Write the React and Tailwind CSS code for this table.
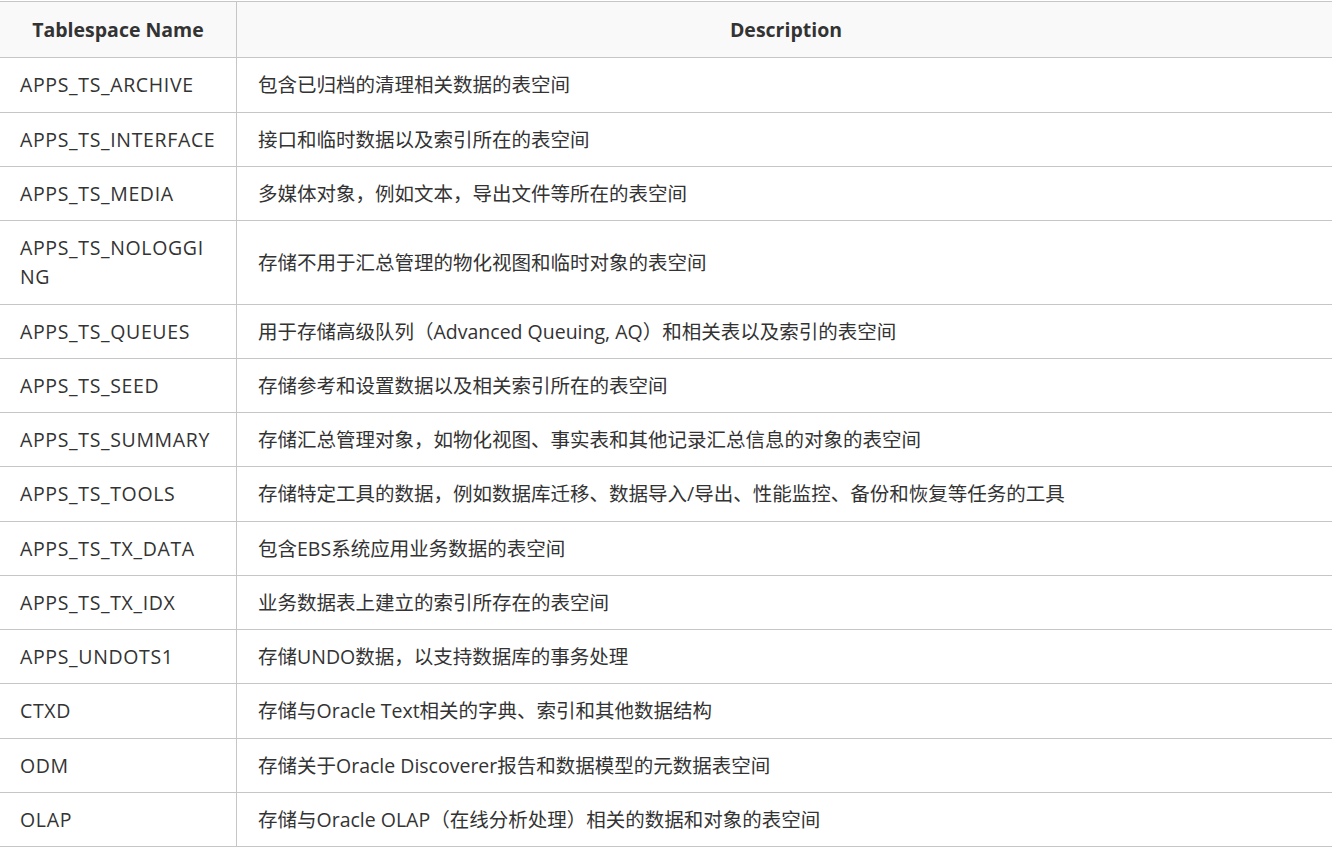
import React from "react";

const rows = [
  ["APPS_TS_ARCHIVE", "包含已归档的清理相关数据的表空间"],
  ["APPS_TS_INTERFACE", "接口和临时数据以及索引所在的表空间"],
  ["APPS_TS_MEDIA", "多媒体对象，例如文本，导出文件等所在的表空间"],
  ["APPS_TS_NOLOGGING", "存储不用于汇总管理的物化视图和临时对象的表空间"],
  ["APPS_TS_QUEUES", "用于存储高级队列（Advanced Queuing, AQ）和相关表以及索引的表空间"],
  ["APPS_TS_SEED", "存储参考和设置数据以及相关索引所在的表空间"],
  ["APPS_TS_SUMMARY", "存储汇总管理对象，如物化视图、事实表和其他记录汇总信息的对象的表空间"],
  ["APPS_TS_TOOLS", "存储特定工具的数据，例如数据库迁移、数据导入/导出、性能监控、备份和恢复等任务的工具"],
  ["APPS_TS_TX_DATA", "包含EBS系统应用业务数据的表空间"],
  ["APPS_TS_TX_IDX", "业务数据表上建立的索引所存在的表空间"],
  ["APPS_UNDOTS1", "存储UNDO数据，以支持数据库的事务处理"],
  ["CTXD", "存储与Oracle Text相关的字典、索引和其他数据结构"],
  ["ODM", "存储关于Oracle Discoverer报告和数据模型的元数据表空间"],
  ["OLAP", "存储与Oracle OLAP（在线分析处理）相关的数据和对象的表空间"],
];

export default function App() {
  return (
    <div
      className="w-full overflow-hidden bg-white pt-px text-[#333] text-[19.5px] leading-[1.5]"
      style={{ fontFamily: '"Open Sans", "Noto Sans CJK SC", sans-serif' }}
    >
      <table className="-ml-px w-[1337px] table-fixed border-collapse">
        <colgroup>
          <col className="w-[237px]" />
          <col />
        </colgroup>
        <thead>
          <tr className="bg-[#f9f9f9]">
            <th className="border border-[#c6c6c6] px-5 py-[13px] text-center font-bold">
              Tablespace Name
            </th>
            <th className="border border-[#c6c6c6] px-5 py-[13px] text-center font-bold">
              Description
            </th>
          </tr>
        </thead>
        <tbody>
          {rows.map(([name, desc]) => (
            <tr key={name}>
              <td className="border border-[#c6c6c6] pl-5 pr-[19px] py-3 break-all tracking-[0.65px]">{name}</td>
              <td className="border border-[#c6c6c6] pl-[21px] pr-5 py-3">{desc}</td>
            </tr>
          ))}
        </tbody>
      </table>
    </div>
  );
}
